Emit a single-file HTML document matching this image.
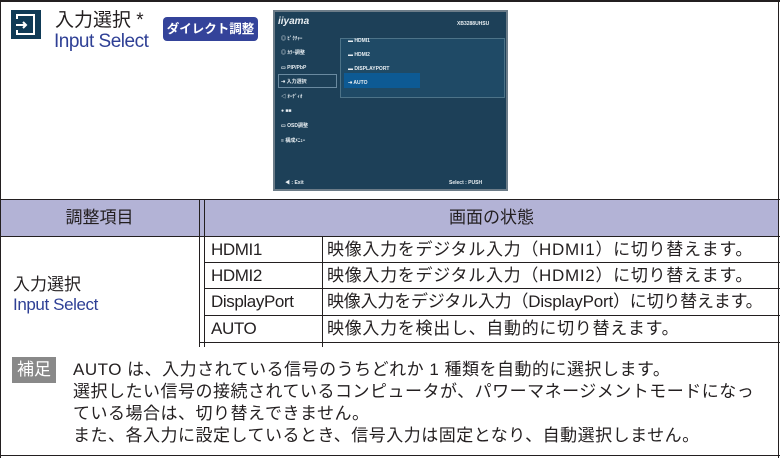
<!DOCTYPE html>
<html><head><meta charset="utf-8"><style>
*{margin:0;padding:0;box-sizing:border-box}
body{width:780px;height:458px;background:#fff;position:relative;overflow:hidden;font-family:"Liberation Sans","Noto Sans CJK JP",sans-serif;color:#231f20}
.a{position:absolute;white-space:nowrap;line-height:20px}
.ln{position:absolute;background:#231f20}
.osd{position:absolute;left:273px;top:10px;width:235px;height:181px;background:#1d4058;border:2px solid #6c7c88}
.osd .t{position:absolute;color:#e8eef2;font-size:5px;font-weight:bold;line-height:6px}
.r{font-size:17px;letter-spacing:-0.4px}
.j{font-size:17px;letter-spacing:0.7px}
</style></head><body>
<div class="ln" style="left:0;top:0;width:780px;height:2px"></div>
<div class="ln" style="left:0;top:0;width:1px;height:458px"></div>
<div class="ln" style="left:778px;top:0;width:1px;height:458px"></div>
<div class="ln" style="left:0;top:455px;width:780px;height:1px"></div>
<div class="ln" style="left:0;top:199px;width:780px;height:1px"></div>

<div class="a" style="left:11px;top:10px;width:30px;height:29px;background:#0f3a56"></div>
<svg class="a" style="left:11px;top:10px" width="30" height="29"><path d="M6 9V5h17v19H6v-4" fill="none" stroke="#fff" stroke-width="2"/><path d="M5 15h10M12 12l3 3-3 3" fill="none" stroke="#fff" stroke-width="2"/></svg>
<div class="a" style="left:55px;top:10px;font-size:19px;line-height:22px">入力選択 *</div>
<div class="a" style="left:54px;top:31px;font-size:19px;line-height:22px;color:#2e3f95;letter-spacing:-0.5px">Input Select</div>
<div class="a" style="left:163px;top:17px;width:95px;height:24px;background:#34439a;border-radius:4px;color:#fff;font-size:12.5px;font-weight:bold;text-align:center;line-height:24px">ダイレクト調整</div>

<div class="osd">
<div class="t" style="left:3px;top:4px;font-size:10px;line-height:11px;font-style:italic">iiyama</div>
<div class="t" style="left:182px;top:9px">XB3288UHSU</div>
<div style="position:absolute;left:65px;top:26px;width:165px;height:60px;border:1px solid #4d7388;background:#1f4a66"></div>
<div style="position:absolute;left:69px;top:61px;width:76px;height:15px;background:#0d5a94"></div>
<div style="position:absolute;left:3px;top:62px;width:59px;height:14px;border:1px solid #6a8aa0"></div>
<div class="t" style="left:6px;top:24px">◎ ﾋﾟｸﾁｬｰ</div>
<div class="t" style="left:6px;top:38px">◎ ｶﾗｰ調整</div>
<div class="t" style="left:6px;top:53px">▭ PIP/PbP</div>
<div class="t" style="left:6px;top:67px">⇥ 入力選択</div>
<div class="t" style="left:6px;top:82px">◁ ｵｰﾃﾞｨｵ</div>
<div class="t" style="left:6px;top:96px">● ■■</div>
<div class="t" style="left:6px;top:111px">▭ OSD調整</div>
<div class="t" style="left:6px;top:126px">≡ 構成ﾒﾆｭｰ</div>
<div class="t" style="left:73px;top:26px">▬ HDMI1</div>
<div class="t" style="left:73px;top:40px">▬ HDMI2</div>
<div class="t" style="left:73px;top:54px">▬ DISPLAYPORT</div>
<div class="t" style="left:73px;top:68px">⇥ AUTO</div>
<div class="t" style="left:10px;top:168px">◀ : Exit</div>
<div class="t" style="left:174px;top:168px">Select : PUSH</div>
</div>

<div class="a" style="left:1px;top:200px;width:777px;height:36px;background:#b3b3d6"></div>
<div class="ln" style="left:0;top:236px;width:780px;height:1px"></div>
<div class="a" style="left:0;top:208px;width:199px;text-align:center;font-size:17px">調整項目</div>
<div class="a" style="left:205px;top:208px;width:573px;text-align:center;font-size:17px">画面の状態</div>
<div class="ln" style="left:199px;top:200px;width:1px;height:147px"></div>
<div class="ln" style="left:204px;top:200px;width:1px;height:147px"></div>
<div class="ln" style="left:322px;top:237px;width:1px;height:110px"></div>
<div class="ln" style="left:205px;top:262px;width:575px;height:1px"></div>
<div class="ln" style="left:205px;top:288px;width:575px;height:1px"></div>
<div class="ln" style="left:205px;top:315px;width:575px;height:1px"></div>
<div class="ln" style="left:199px;top:342px;width:581px;height:1px"></div>

<div class="a" style="left:13px;top:275px;font-size:17px">入力選択</div>
<div class="a" style="left:13px;top:295px;font-size:17px;color:#2e3f95;letter-spacing:-0.4px">Input Select</div>

<div class="a r" style="left:211px;top:240px">HDMI1</div>
<div class="a r" style="left:211px;top:266px">HDMI2</div>
<div class="a r" style="left:211px;top:292px">DisplayPort</div>
<div class="a r" style="left:211px;top:319px">AUTO</div>
<div class="a j" style="left:327px;top:240px">映像入力をデジタル入力（HDMI1）に切り替えます。</div>
<div class="a j" style="left:327px;top:266px">映像入力をデジタル入力（HDMI2）に切り替えます。</div>
<div class="a j" style="left:327px;top:292px;letter-spacing:-0.2px">映像入力をデジタル入力（DisplayPort）に切り替えます。</div>
<div class="a j" style="left:327px;top:319px">映像入力を検出し、自動的に切り替えます。</div>

<div class="a" style="left:12px;top:357px;width:44px;height:26px;background:#898989;color:#fff;font-size:17px;text-align:center;line-height:26px">補足</div>
<div class="a" style="left:73px;top:359px;font-size:17px;line-height:22px;letter-spacing:0.5px">AUTO は、入力されている信号のうちどれか 1 種類を自動的に選択します。<br>選択したい信号の接続されているコンピュータが、パワーマネージメントモードになっ<br>ている場合は、切り替えできません。<br>また、各入力に設定しているとき、信号入力は固定となり、自動選択しません。</div>
</body></html>
